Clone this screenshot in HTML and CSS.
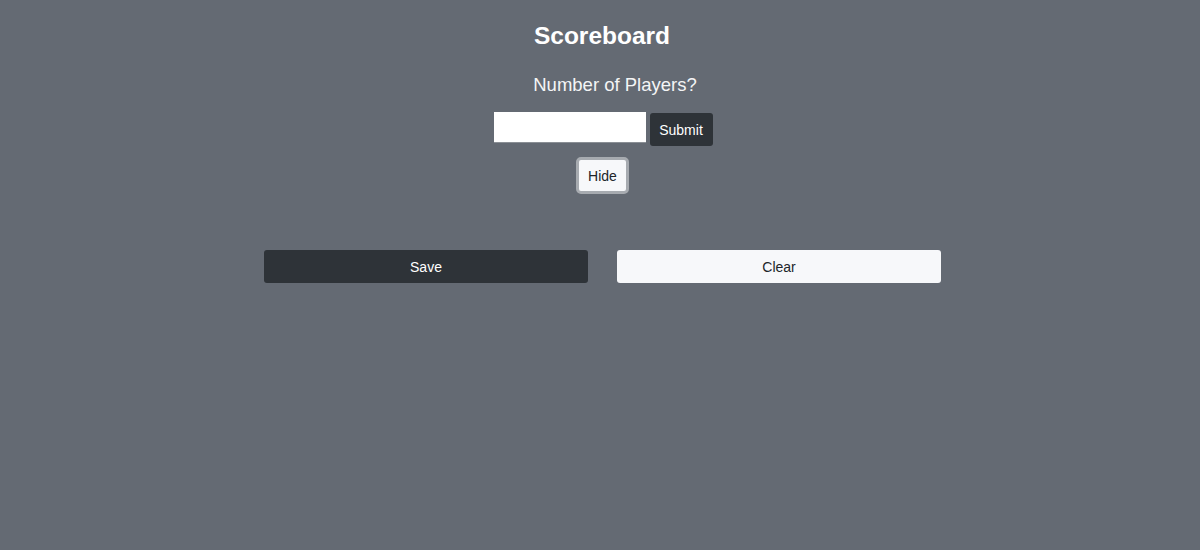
FILE: index.html
```html
<!DOCTYPE html>
<html>
<head>
<meta charset="utf-8">
<link rel="stylesheet" href="styles.css">
</head>
<body>
<main class="app">
  <h1 class="title">Scoreboard</h1>
  <p class="question">Number of Players?</p>
  <form class="player-form">
    <input class="player-input" type="text">
    <button type="button" class="btn btn-dark btn-submit">Submit</button>
  </form>
  <button type="button" class="btn btn-light btn-hide">Hide</button>
  <div class="actions">
    <button type="button" class="btn btn-dark btn-wide">Save</button>
    <button type="button" class="btn btn-light btn-wide">Clear</button>
  </div>
</main>
</body>
</html>
```

FILE: styles.css
```css
html, body {
  margin: 0;
  padding: 0;
  background: #646a73;
  height: 100%;
}
body {
  font-family: "Liberation Sans", Arial, sans-serif;
  color: #fff;
}
.app {
  display: flex;
  flex-direction: column;
  align-items: center;
  padding-top: 21px;
}
.title {
  margin: 0;
  font-size: 24.5px;
  font-weight: 700;
  line-height: 30px;
  padding-left: 4px;
}
.question {
  margin: 22px 0 0 0;
  font-size: 18.5px;
  line-height: 24px;
  font-weight: 400;
  color: #f4f5f6;
  padding-left: 30px;
}
.player-form {
  display: flex;
  align-items: flex-start;
  gap: 4px;
  margin-top: 15px;
  padding-left: 6px;
}
.player-input {
  width: 152px;
  height: 31px;
  box-sizing: border-box;
  border: none;
  border-bottom: 1px solid #8a8f95;
  background: #fff;
  padding: 0 6px;
  margin: 0;
}
.btn {
  font-family: "Liberation Sans", Arial, sans-serif;
  font-size: 14px;
  border-radius: 3px;
  border: none;
  cursor: pointer;
  margin: 0;
}
.btn-dark {
  background: #2e3338;
  color: #fff;
}
.btn-light {
  background: #f7f8fa;
  color: #212529;
}
.btn-submit {
  height: 33px;
  width: 63px;
  margin-top: 1px;
  padding: 0;
}
.btn-hide {
  margin-top: 11px;
  width: 53px;
  height: 37px;
  padding: 0;
  border: 3px solid #a7abb0;
  border-radius: 5px;
  margin-left: 5px;
}
.actions {
  display: flex;
  gap: 29px;
  margin-top: 56px;
  margin-left: 5px;
}
.btn-wide {
  width: 324px;
  height: 33px;
  padding: 0;
}
```
